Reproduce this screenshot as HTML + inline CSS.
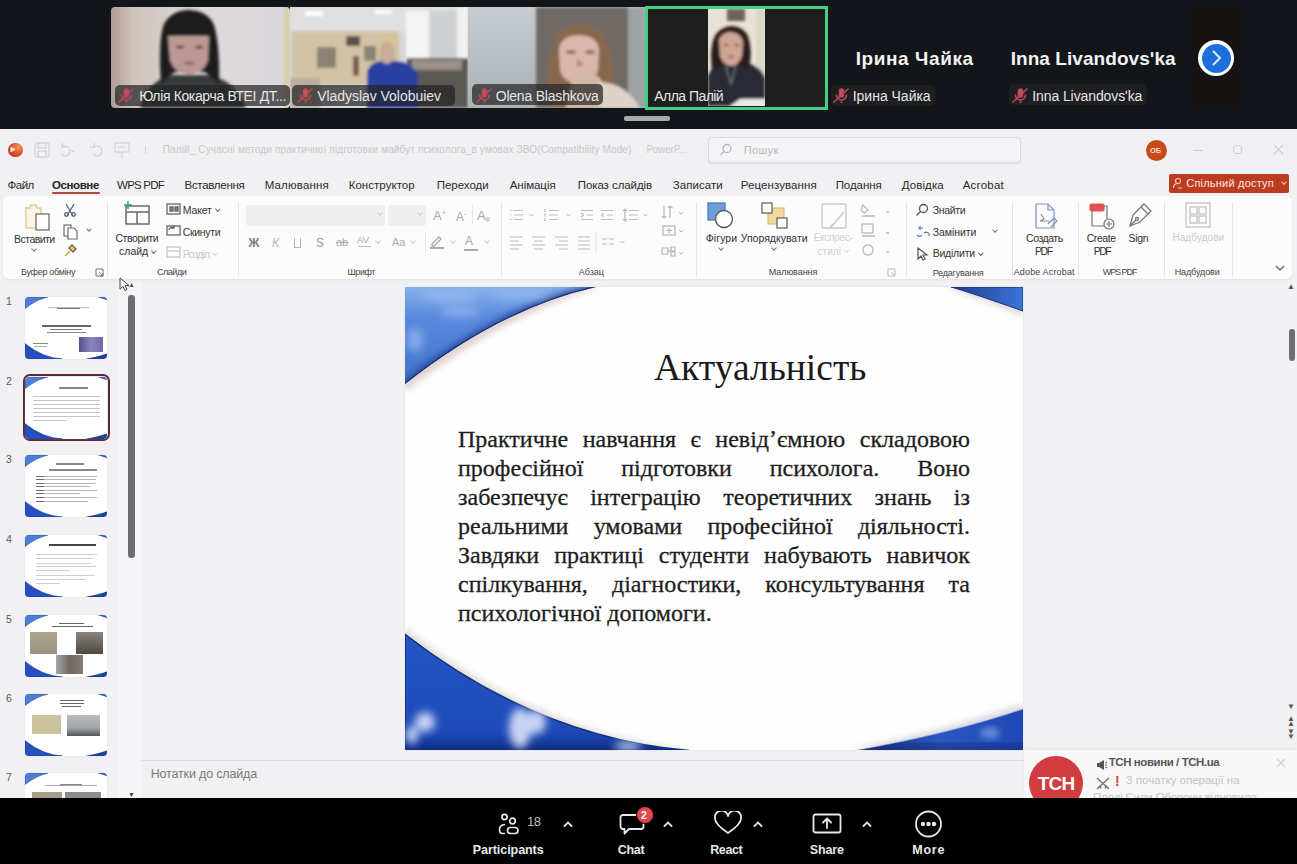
<!DOCTYPE html>
<html><head><meta charset="utf-8">
<style>
*{margin:0;padding:0;box-sizing:border-box}
html,body{width:1297px;height:864px;overflow:hidden;background:#131619;font-family:"Liberation Sans",sans-serif}
.a{position:absolute}
.t{position:absolute;white-space:nowrap;line-height:1}
#top{left:0;top:0;width:1297px;height:129px;background:#121519}
.tile{position:absolute;top:7px;height:101px;overflow:hidden}
.lbl{position:absolute;height:21px;background:rgba(36,36,38,.72);border-radius:5px}
.nm{position:absolute;color:#e6e6e6;font-size:14px;line-height:1;white-space:nowrap}
#ppt{left:0;top:129px;width:1297px;height:669px;background:#f1f0f2;overflow:hidden}
#bot{left:0;top:798px;width:1297px;height:66px;background:#000}
.tab{position:absolute;top:49px;font-size:11.5px;color:#2a2a2a;line-height:1;white-space:nowrap}
.rb{position:absolute;font-size:10.5px;color:#333;line-height:1;white-space:nowrap}
.gl{position:absolute;top:139px;font-size:9px;color:#444;line-height:1;white-space:nowrap}
.sep{position:absolute;top:73px;width:1px;height:74px;background:#e4e4e4}
.thumb{position:absolute;left:25px;width:82px;height:62px;border-radius:4px;overflow:hidden;background:#fff;box-shadow:0 0 1px #bbb}
.num{position:absolute;left:6px;font-size:10.5px;color:#5a5a5a;line-height:1}
.bl{position:absolute;top:46px;color:#eaeaea;font-size:12.5px;font-weight:bold;line-height:1;white-space:nowrap}
.bodyl{font-family:"Liberation Serif",serif;font-size:24px;line-height:28.9px;color:#1e1e1e;white-space:nowrap;-webkit-text-stroke:0.3px #1e1e1e}
.cv{position:absolute;width:4px;height:4px;border-right:1.1px solid #777;border-bottom:1.1px solid #777;transform:rotate(45deg)}
.cvi{display:inline-block;width:3.5px;height:3.5px;border-right:1px solid currentColor;border-bottom:1px solid currentColor;transform:rotate(45deg);margin-left:4px;vertical-align:3px;opacity:.8}
.chev{position:absolute;top:19px;width:7px;height:7px;border-left:1.6px solid #ddd;border-top:1.6px solid #ddd;transform:rotate(45deg)}
</style></head><body>
<!-- ============ TOP ZOOM STRIP ============ -->
<div id="top" class="a">
  <svg class="a" style="left:0;top:0" width="1297" height="129" viewBox="0 0 1297 129">
    <defs>
      <filter id="pb" x="-10%" y="-10%" width="120%" height="120%"><feGaussianBlur stdDeviation="1.6"/></filter>
      <filter id="pb2" x="-10%" y="-10%" width="120%" height="120%"><feGaussianBlur stdDeviation="3"/></filter>
      <clipPath id="c1"><rect x="111" y="7" width="179" height="101" rx="4"/></clipPath>
      <clipPath id="c2"><rect x="290" y="7" width="178" height="101"/></clipPath>
      <clipPath id="c3"><rect x="468" y="7" width="178" height="101"/></clipPath>
      <clipPath id="c4"><rect x="708" y="9" width="57" height="97"/></clipPath>
      <linearGradient id="w1" x1="0" y1="0" x2="1" y2="0"><stop offset="0" stop-color="#b09c94"/><stop offset=".12" stop-color="#cfc3bc"/><stop offset=".35" stop-color="#d9d1cd"/><stop offset=".6" stop-color="#dedadc"/><stop offset="1" stop-color="#d9d6da"/></linearGradient>
      <linearGradient id="w3" x1="0" y1="0" x2="0" y2="1"><stop offset="0" stop-color="#c6cccf"/><stop offset="1" stop-color="#aab2b5"/></linearGradient>
    </defs>
    <g clip-path="url(#c1)">
      <rect x="111" y="7" width="179" height="101" fill="url(#w1)"/>
      <g filter="url(#pb)">
        <path d="M140 108Q148 80 172 75H208Q236 80 246 108Z" fill="#343a3a"/>
        <path d="M161 84Q158 40 164 24Q172 10 189 10Q208 11 214 25Q220 45 219 84Q210 76 205 72H175Q168 76 161 84Z" fill="#1d1a1d"/>
        <path d="M168 36Q169 32 190 32Q209 32 209 38L208 60Q204 73 189 75Q174 73 170 60Z" fill="#bc9893"/>
        <rect x="166" y="28" width="46" height="8" fill="#1d1a1d"/>
        <ellipse cx="180" cy="47" rx="4" ry="1.5" fill="#5a3c3c"/><ellipse cx="199" cy="47" rx="4" ry="1.5" fill="#5a3c3c"/><ellipse cx="189" cy="63" rx="5" ry="1.5" fill="#8a5a5a"/>
        <rect x="284" y="7" width="6" height="101" fill="#d9cfa8"/>
      </g>
    </g>
    <g clip-path="url(#c2)">
      <rect x="290" y="7" width="178" height="101" fill="#d6d6d6"/>
      <g filter="url(#pb)">
        <rect x="290" y="7" width="178" height="25" fill="#e0e0e0"/>
        <rect x="305" y="11" width="18" height="5" fill="#fdfdfd"/>
        <rect x="375" y="10" width="17" height="4" fill="#fdfdfd"/>
        <rect x="406" y="11" width="23" height="48" fill="#f4f4f4"/>
        <rect x="429" y="11" width="28" height="50" fill="#cdd0d1"/>
        <rect x="457" y="7" width="11" height="52" fill="#f2f2f2"/>
        <rect x="292" y="31" width="107" height="54" fill="#d2c3a6"/>
        <rect x="317" y="47" width="19" height="21" fill="#8a8274"/>
        <rect x="346" y="36" width="14" height="10" fill="#5a534c"/>
        <rect x="364" y="46" width="12" height="15" fill="#8a8274"/>
        <rect x="353" y="56" width="6" height="20" fill="#7a5a48"/>
        <rect x="290" y="78" width="30" height="30" fill="#b9ae9f"/>
        <rect x="407" y="58" width="61" height="50" fill="#5c5853"/>
        <rect x="412" y="60" width="50" height="10" fill="#9a9088"/>
        <path d="M367 108V72Q370 61 386 60Q412 61 418 74V108Z" fill="#2c3fa0"/>
        <ellipse cx="387" cy="53" rx="8" ry="11" fill="#c9ab98"/>
        <path d="M377 48Q378 38 387 38Q397 38 397 48Q393 42 387 42Q381 42 377 48Z" fill="#d8c48e"/>
      </g>
    </g>
    <g clip-path="url(#c3)">
      <rect x="468" y="7" width="178" height="101" fill="url(#w3)"/>
      <g filter="url(#pb)">
        <rect x="536" y="7" width="92" height="101" fill="#6f6a66"/>
        <rect x="628" y="7" width="18" height="101" fill="#9ea3a6"/>
        <path d="M548 108Q546 60 556 36Q566 24 580 24Q598 25 606 40Q614 60 616 108Z" fill="#86674e"/>
        <path d="M559 50Q560 36 579 35Q598 36 599 50L598 70Q594 84 578 84Q563 82 560 70Z" fill="#dab6aa"/>
        <ellipse cx="571" cy="52" rx="5" ry="1.6" fill="#6a4a40"/><ellipse cx="590" cy="52" rx="5" ry="1.6" fill="#6a4a40"/><path d="M578 58L576 66H584Z" fill="#b88a80"/>
        <path d="M566 108Q568 76 584 70Q600 72 606 90L612 108Z" fill="#d2b9a4"/>
        <path d="M598 82Q625 82 640 108H600Z" fill="#ddd3c8"/>
      </g>
    </g>
    <!-- tile 4 -->
    <rect x="646.5" y="7.5" width="180" height="101" fill="#1f1e1e" stroke="#44cf86" stroke-width="3"/>
    <g clip-path="url(#c4)">
      <rect x="708" y="9" width="57" height="97" fill="#e8e3d6"/>
      <g filter="url(#pb)">
        <rect x="756" y="9" width="9" height="97" fill="#dcd6c6"/>
        <rect x="727" y="9" width="18" height="12" fill="#6d6258"/>
        <path d="M708 106V76Q711 66 722 63Q735 61 750 64Q762 68 765 78V106Z" fill="#2b2c36"/>
        <path d="M712 70Q709 45 716 34Q723 26 732 26Q744 27 748 36Q753 50 749 70Q740 64 731 64Q720 64 712 70Z" fill="#2a1f1d"/>
        <path d="M719 40Q722 32 731 32Q741 33 743 42L742 56Q738 66 731 66Q723 65 720 56Z" fill="#cfa594"/>
        <ellipse cx="726" cy="45" rx="2.5" ry="1" fill="#5a3a34"/><ellipse cx="737" cy="45" rx="2.5" ry="1" fill="#5a3a34"/><ellipse cx="731" cy="57" rx="3.5" ry="1.2" fill="#a06a60"/>
        <path d="M726 66L731 84L736 66" stroke="#8a8a90" stroke-width="1" fill="none"/>
        <path d="M730 106L740 99H765V106Z" fill="#e5ebe8"/>
      </g>
    </g>
  </svg>
  <!-- labels -->
  <div class="lbl" style="left:115px;top:85px;width:175px"></div>
  <div class="lbl" style="left:292px;top:85px;width:163px"></div>
  <div class="lbl" style="left:472px;top:84px;width:131px"></div>
  <div class="lbl" style="left:831px;top:85px;width:104px"></div>
  <div class="lbl" style="left:1009px;top:84px;width:138px"></div>
  <div class="nm" style="letter-spacing:-0.36px;left:139.2px;top:88.6px">Юлія Кокарча ВТЕІ ДТ...</div>
  <div class="nm" style="letter-spacing:-0.04px;left:317.2px;top:88.6px">Vladyslav Volobuiev</div>
  <div class="nm" style="letter-spacing:-0.20px;left:495.7px;top:88.6px">Olena Blashkova</div>
  <div class="nm" style="letter-spacing:-0.55px;left:654.3px;top:88.6px">Алла Палій</div>
  <div class="nm" style="letter-spacing:-0.01px;left:852.7px;top:88.6px">Ірина Чайка</div>
  <div class="nm" style="letter-spacing:-0.10px;left:1032.3px;top:88.6px">Inna Livandovsʹka</div>
  <!-- mic muted icons -->
  <svg class="a" style="left:117px;top:87px" width="18" height="17" viewBox="0 0 18 17"><g stroke="#b94a55" stroke-width="1.6" fill="none" stroke-linecap="round"><rect x="7.5" y="2" width="4" height="8" rx="2" fill="#c25560"/><path d="M4.5 8a5 5 0 0 0 10 0M9.5 13v2.5M2 15L16 2"/></g></svg>
  <svg class="a" style="left:296px;top:87px" width="18" height="17" viewBox="0 0 18 17"><g stroke="#b94a55" stroke-width="1.6" fill="none" stroke-linecap="round"><rect x="7.5" y="2" width="4" height="8" rx="2" fill="#c25560"/><path d="M4.5 8a5 5 0 0 0 10 0M9.5 13v2.5M2 15L16 2"/></g></svg>
  <svg class="a" style="left:475px;top:87px" width="18" height="17" viewBox="0 0 18 17"><g stroke="#b94a55" stroke-width="1.6" fill="none" stroke-linecap="round"><rect x="7.5" y="2" width="4" height="8" rx="2" fill="#c25560"/><path d="M4.5 8a5 5 0 0 0 10 0M9.5 13v2.5M2 15L16 2"/></g></svg>
  <svg class="a" style="left:832px;top:87px" width="18" height="17" viewBox="0 0 18 17"><g stroke="#b94a55" stroke-width="1.6" fill="none" stroke-linecap="round"><rect x="7.5" y="2" width="4" height="8" rx="2" fill="#c25560"/><path d="M4.5 8a5 5 0 0 0 10 0M9.5 13v2.5M2 15L16 2"/></g></svg>
  <svg class="a" style="left:1011px;top:87px" width="18" height="17" viewBox="0 0 18 17"><g stroke="#b94a55" stroke-width="1.6" fill="none" stroke-linecap="round"><rect x="7.5" y="2" width="4" height="8" rx="2" fill="#c25560"/><path d="M4.5 8a5 5 0 0 0 10 0M9.5 13v2.5M2 15L16 2"/></g></svg>
  <!-- big names -->
  <div class="t" style="color:#f2f2f2;font-size:19px;font-weight:bold;letter-spacing:0.59px;left:855.7px;top:48.7px">Ірина Чайка</div>
  <div class="t" style="color:#f2f2f2;font-size:19px;font-weight:bold;letter-spacing:0.06px;left:1010.7px;top:49.2px">Inna Livandovsʹka</div>
  <div class="a" style="left:1192px;top:8px;width:48px;height:100px;background:#1a130e;opacity:.45"></div>
  <div class="a" style="left:1198px;top:40px;width:36px;height:36px;border-radius:50%;background:#fff"></div>
  <div class="a" style="left:1201.5px;top:43.5px;width:29px;height:29px;border-radius:50%;background:#1e6fdc"></div>
  <svg class="a" style="left:1198px;top:40px" width="36" height="36" viewBox="0 0 36 36"><path d="M15.5 11.5l6.5 6.5-6.5 6.5" stroke="#d8ecff" stroke-width="2" fill="none" stroke-linecap="round" stroke-linejoin="round"/></svg>
  <div class="a" style="left:624px;top:116px;width:46px;height:5px;background:#a9a9ab;border-radius:2px"></div>
</div>

<!-- ============ POWERPOINT ============ -->
<div id="ppt" class="a">
  <!-- title bar -->
  <div class="a" style="left:8px;top:13.5px;width:14.5px;height:14.5px;border-radius:50%;background:radial-gradient(circle at 70% 30%,#f59a5a,#d9502c 50%,#9e2418)"></div>
  <svg class="a" style="left:10px;top:17px" width="6" height="7" viewBox="0 0 6 7"><path d="M0.5 0.5L5.5 3.5L0.5 6.5Z" fill="#fbe3dc"/></svg>
  <svg class="a" style="left:34px;top:12px" width="110" height="18" viewBox="0 0 110 18" fill="none" stroke="#d2d0d4" stroke-width="1.2">
    <rect x="1" y="2" width="14" height="14" rx="1.5"/><rect x="4" y="2" width="8" height="5"/><rect x="4" y="10" width="8" height="6"/>
    <path d="M28 6a5 5 0 1 1 -1 7M28 2v4h4"/><path d="M37 9l2 2 2-2" stroke-width="1"/>
    <path d="M64 6a5 5 0 1 1 -1 7" transform="translate(-4 0)"/><path d="M60 2v4h-4"/>
    <rect x="81" y="2" width="14" height="9"/><path d="M88 11v6M84 6h8"/>
  </svg>
  <div class="a" style="left:145px;top:17px;width:1px;height:8px;background:#d6d4d8"></div>
  <div class="t" style="font-size:10px;color:#c9c7cb;letter-spacing:0.13px;left:162.7px;top:16.1px">Палій_ Сучасні методи практичної підготовки майбут психолога_в умовах ЗВО(Compatibility Mode)</div>
  <div class="t" style="font-size:10px;color:#cbc9cd;letter-spacing:-0.22px;left:646.4px;top:16.1px">PowerP...</div>
  <div class="a" style="left:708px;top:8px;width:313px;height:26px;border:1px solid #dcdadd;border-radius:4px;background:#f5f4f6;box-shadow:0 1px 1px #e0dee1"></div>
  <svg class="a" style="left:719px;top:14px" width="14" height="14" viewBox="0 0 14 14" fill="none" stroke="#b9b7bb" stroke-width="1.3"><circle cx="8" cy="5.5" r="4"/><path d="M5 8.5L1.5 12"/></svg>
  <div class="t" style="font-size:11px;color:#b9b7bb;letter-spacing:0.36px;left:743.7px;top:15.6px">Пошук</div>
  <div class="a" style="left:1146px;top:11px;width:21px;height:21px;border-radius:50%;background:#c84a16"></div>
  <div class="t" style="left:1150px;top:18px;font-size:7.5px;color:#f7e0d2;font-weight:bold">ОБ</div>
  <div class="a" style="left:1193px;top:21px;width:10px;height:1px;background:#cfcdd1"></div>
  <div class="a" style="left:1233px;top:16px;width:9px;height:9px;border:1.5px solid #d2d0d4;border-radius:3px"></div>
  <svg class="a" style="left:1273px;top:15px" width="11" height="11" viewBox="0 0 11 11" stroke="#d0ced2" stroke-width="1.1"><path d="M1 1l9 9M10 1l-9 9"/></svg>

  <!-- tabs -->
  <div class="tab" style="letter-spacing:-0.53px;left:7.6px;top:50.9px">Файл</div>
  <div class="tab" style="font-weight:bold;color:#222;letter-spacing:-0.42px;left:52.1px;top:50.9px">Основне</div>
  <div class="a" style="left:52px;top:63px;width:48px;height:2px;background:#ad4a3c;border-radius:1px"></div>
  <div class="tab" style="letter-spacing:-0.80px;left:117.1px;top:50.9px">WPS PDF</div>
  <div class="tab" style="letter-spacing:-0.29px;left:184.5px;top:50.9px">Вставлення</div>
  <div class="tab" style="letter-spacing:0.16px;left:264.7px;top:50.9px">Малювання</div>
  <div class="tab" style="letter-spacing:0.04px;left:348.7px;top:50.9px">Конструктор</div>
  <div class="tab" style="letter-spacing:-0.02px;left:436.7px;top:50.9px">Переходи</div>
  <div class="tab" style="letter-spacing:-0.04px;left:509.7px;top:50.9px">Анімація</div>
  <div class="tab" style="letter-spacing:-0.07px;left:577.7px;top:50.9px">Показ слайдів</div>
  <div class="tab" style="letter-spacing:0.06px;left:672.7px;top:50.9px">Записати</div>
  <div class="tab" style="letter-spacing:0.09px;left:740.7px;top:50.9px">Рецензування</div>
  <div class="tab" style="letter-spacing:-0.08px;left:835.7px;top:50.9px">Подання</div>
  <div class="tab" style="letter-spacing:0.10px;left:901.7px;top:50.9px">Довідка</div>
  <div class="tab" style="letter-spacing:0.23px;left:962.7px;top:50.9px">Acrobat</div>
  <div class="a" style="left:1169px;top:44.5px;width:119.5px;height:19.5px;background:#bd3c21;border-radius:2px"></div>
  <svg class="a" style="left:1172px;top:48px" width="11" height="12" viewBox="0 0 11 12" fill="none" stroke="#f3c9bb" stroke-width="1.1"><circle cx="6" cy="4" r="2.5"/><path d="M1.5 11c0-3 2-4.5 4.5-4.5M6 11h4"/></svg>
  <div class="t" style="font-size:11px;color:#fbe9e2;letter-spacing:0.20px;left:1186.3px;top:49.1px">Спільний доступ</div>
  <div class="cv" style="left:1281.5px;top:51px;border-color:#f3c9bb;width:4px;height:4px"></div>

  <!-- ribbon -->
  <div class="a" style="left:3px;top:67px;width:1289px;height:83px;background:#fcfcfc;border-radius:6px;box-shadow:0 1px 2px #e2e0e3"></div>
  <div class="sep" style="left:107px"></div>
  <div class="sep" style="left:238px"></div>
  <div class="sep" style="left:501px"></div>
  <div class="sep" style="left:696px"></div>
  <div class="sep" style="left:906px"></div>
  <div class="sep" style="left:1012px"></div>
  <div class="sep" style="left:1078px"></div>
  <div class="sep" style="left:1164px"></div>
  <div class="sep" style="left:1232px"></div>

  <!-- Буфер обміну -->
  <svg class="a" style="left:23px;top:73px" width="28" height="30" viewBox="0 0 28 30" fill="none" stroke-width="1.3">
    <path d="M3 6h4l1-3h5l1 3h4v20H3z" stroke="#e3c791" fill="#fbf5e8"/>
    <rect x="13" y="12" width="13" height="16" stroke="#6f6f6f" fill="#fff"/>
  </svg>
  <div class="rb" style="letter-spacing:-0.54px;left:14.1px;top:105.3px">Вставити</div>
  <div class="cv" style="left:31.7px;top:118.4px;border-color:#777"></div>
  <svg class="a" style="left:63px;top:74px" width="14" height="14" viewBox="0 0 14 14" fill="none" stroke="#51637a" stroke-width="1.3"><path d="M3 1l7 12M11 1L4 13"/><circle cx="3.5" cy="11.5" r="1.8"/><circle cx="10.5" cy="11.5" r="1.8"/></svg>
  <svg class="a" style="left:63px;top:95px" width="16" height="16" viewBox="0 0 16 16" fill="none" stroke="#6d6d6d" stroke-width="1.2"><rect x="1" y="1" width="7" height="11"/><path d="M5 4h6l3 3v8H5z" fill="#fff"/></svg>
  <div class="cv" style="left:87.2px;top:98.0px;border-color:#777"></div>
  <svg class="a" style="left:63px;top:115px" width="14" height="14" viewBox="0 0 14 14" fill="none" stroke-width="1.5"><path d="M2 12l5-5" stroke="#c9a04a"/><path d="M6 4l4 4 3-3-4-4z" stroke="#7a6a45" fill="#e9c46a"/></svg>
  <div class="gl" style="letter-spacing:-0.28px;left:21.0px;top:139.3px">Буфер обміну</div>
  <svg class="a" style="left:95px;top:139px" width="9" height="9" viewBox="0 0 9 9" fill="none" stroke="#777" stroke-width="1"><path d="M1 1h7v7H1zM4 4l4 4M5 8h3V5"/></svg>

  <!-- Слайди -->
  <svg class="a" style="left:122px;top:71px" width="30" height="26" viewBox="0 0 30 26" fill="none" stroke-width="1.5">
    <rect x="4" y="6" width="23" height="18" stroke="#6a6a6a"/><path d="M4 12h23M15 12v12" stroke="#6a6a6a"/>
    <path d="M6 1v8M2 5h8" stroke="#3fa36a"/>
  </svg>
  <div class="rb" style="letter-spacing:-0.40px;left:115.4px;top:104.4px">Створити</div>
  <div class="rb" style="left:119px;top:117px">слайд<span class="cvi"></span></div>
  <svg class="a" style="left:166px;top:203px;display:none" width="1" height="1"></svg>
  <svg class="a" style="left:166px;top:74px" width="15" height="12" viewBox="0 0 15 12" fill="none" stroke="#666" stroke-width="1.3"><rect x="1" y="1" width="13" height="10"/><path d="M4 4h3v4H4zM9 4h3v4H9z" fill="#888"/></svg>
  <div class="rb" style="letter-spacing:-0.13px;left:182.7px;top:75.7px">Макет<span class="cvi"></span></div>
  <svg class="a" style="left:166px;top:95px" width="15" height="12" viewBox="0 0 15 12" fill="none" stroke="#666" stroke-width="1.3"><rect x="1" y="2" width="13" height="9"/><path d="M3 6a3 3 0 0 1 5 -2M8 1v3h-3"/></svg>
  <div class="rb" style="letter-spacing:-0.29px;left:182.7px;top:97.9px">Скинути</div>
  <svg class="a" style="left:166px;top:117px" width="15" height="12" viewBox="0 0 15 12" fill="none" stroke="#c7c7c7" stroke-width="1.3"><rect x="1" y="1" width="13" height="10"/><path d="M1 5h13"/></svg>
  <div class="rb" style="color:#c9c9c9;letter-spacing:-0.78px;left:182.7px;top:119.7px">Розділ<span class="cvi"></span></div>
  <div class="gl" style="letter-spacing:-0.47px;left:157.0px;top:139.3px">Слайди</div>

  <!-- Шрифт -->
  <div class="a" style="left:246px;top:76px;width:139px;height:21px;background:#efefef;border-radius:3px"></div>
  <div class="a" style="left:388px;top:76px;width:38px;height:21px;background:#efefef;border-radius:3px"></div>
  <div class="cv" style="left:377.5px;top:82.0px;border-color:#ccc"></div>
  <div class="cv" style="left:417.5px;top:82.0px;border-color:#ccc"></div>
  <div class="t" style="left:433px;top:80px;font-size:13px;color:#a8a8a8">A<sup style="font-size:7px">+</sup></div>
  <div class="t" style="left:456px;top:81px;font-size:12px;color:#a8a8a8">A<sup style="font-size:7px">-</sup></div>
  <div class="a" style="left:472px;top:76px;width:1px;height:20px;background:#e6e6e6"></div>
  <div class="t" style="left:477px;top:80px;font-size:13px;color:#a8a8a8">A<span style="font-size:9px">ᵩ</span></div>
  <div class="t" style="left:248.5px;top:108px;font-size:12px;color:#7a7a7a;font-weight:bold">Ж</div>
  <div class="t" style="left:272px;top:108px;font-size:12px;color:#b5b5b5;font-style:italic">К</div>
  <div class="a" style="left:294px;top:109px;width:7px;height:10px;border:1.2px solid #b5b5b5;border-top:none"></div>
  <div class="t" style="left:316px;top:108px;font-size:12px;color:#999">S</div>
  <div class="t" style="left:336px;top:108px;font-size:11px;color:#aaa;text-decoration:line-through">ab</div>
  <div class="t" style="left:357px;top:106px;font-size:9.5px;color:#aaa">AV</div>
  <div class="a" style="left:358px;top:117px;width:13px;height:1px;background:#bbb"></div>
  <div class="cv" style="left:376px;top:110px;border-color:#ccc;width:4px;height:4px"></div>
  <div class="t" style="left:392px;top:108px;font-size:11px;color:#aaa">Aa</div>
  <div class="cv" style="left:411px;top:110px;border-color:#ccc;width:4px;height:4px"></div>
  <div class="a" style="left:424.5px;top:104px;width:1px;height:20px;background:#e6e6e6"></div>
  <svg class="a" style="left:429px;top:105px" width="16" height="15" viewBox="0 0 16 15" fill="none" stroke="#aaa" stroke-width="1.3"><path d="M3 10l7-7 2 2-7 7H3z"/><path d="M1 14h14" stroke-width="2"/></svg>
  <div class="cv" style="left:451px;top:110px;border-color:#ccc;width:4px;height:4px"></div>
  <div class="t" style="left:465px;top:106px;font-size:12px;color:#aaa">A</div>
  <div class="a" style="left:464px;top:120px;width:14px;height:2px;background:#aaa"></div>
  <div class="cv" style="left:485px;top:110px;border-color:#ccc;width:4px;height:4px"></div>
  <div class="gl" style="letter-spacing:-0.38px;left:347.4px;top:139.1px">Шрифт</div>

  <!-- Абзац (grey lines) -->
  <svg class="a" style="left:508px;top:78px" width="186" height="52" viewBox="0 0 186 52" fill="none" stroke="#bcbcbc" stroke-width="1.2">
    <path d="M2 3.5h1.5M6 3.5h9M2 8h1.5M6 8h9M2 12.5h1.5M6 12.5h9"/><path d="M21.5 7l2 2 2-2" stroke-width="1"/>
    <path d="M37 2v3M37 6.5v3M37 11v3M41 3.5h9M41 8h9M41 12.5h9"/><path d="M58.5 7l2 2 2-2" stroke-width="1"/>
    <path d="M73 3.5h12M79 8h6M73 12.5h12M73 6l2.5 2-2.5 2"/>
    <path d="M93 3.5h12M99 8h6M93 12.5h12M96 6l-2.5 2 2.5 2"/>
    <path d="M117 2v12M115 4l2-2 2 2M115 12l2 2 2-2M121 3.5h9M121 8h9M121 12.5h9"/><path d="M135.5 7l2 2 2-2" stroke-width="1"/>
    <path d="M2 30h13M2 34h9M2 38h13M2 42h9"/>
    <path d="M24 30h13M26 34h9M24 38h13M26 42h9"/>
    <path d="M47 30h13M51 34h9M47 38h13M51 42h9"/>
    <path d="M70 30h12M70 34h12M70 38h12M70 42h12"/>
    <path d="M88 26v20" stroke="#e4e4e4"/>
    <path d="M94 32h5M101 32h5M94 37h5M101 37h5"/><path d="M112.5 34l2 2 2-2" stroke-width="1"/>
  </svg>
  <svg class="a" style="left:658px;top:75px" width="30" height="58" viewBox="0 0 30 58" fill="none" stroke="#b5b5b5" stroke-width="1.2">
    <path d="M6 2v12M12 2v12M4 12l2 2 2-2M9.5 4l2.5-2 2.5 2"/><path d="M21 8l2 2 2-2" stroke-width="1"/>
    <rect x="5" y="22" width="12" height="9"/><path d="M11 24v5M8 26.5h6"/><path d="M21 26l2 2 2-2" stroke-width="1"/>
    <path d="M4 44h6v6H4zM10 47h3M13 43h4v4h-4zM13 48h4v4h-4z"/><path d="M21 48l2 2 2-2" stroke-width="1"/>
  </svg>
  <div class="gl" style="letter-spacing:0.01px;left:578.7px;top:139.1px">Абзац</div>

  <!-- Малювання -->
  <svg class="a" style="left:706px;top:72px" width="28" height="30" viewBox="0 0 28 30" stroke-width="1.3">
    <rect x="2" y="2" width="17" height="17" fill="#6e9fd8" stroke="#4a7fbe"/>
    <circle cx="18" cy="18" r="8.5" fill="#fff" stroke="#555"/>
  </svg>
  <div class="rb" style="letter-spacing:0.10px;left:705.7px;top:104.1px">Фігури</div>
  <div class="cv" style="left:718.5px;top:117.0px;border-color:#777"></div>
  <svg class="a" style="left:760px;top:72px" width="30" height="30" viewBox="0 0 30 30" stroke-width="1.3">
    <rect x="8" y="7" width="16" height="16" fill="#f1d9a0" stroke="#e0c07a"/>
    <rect x="2" y="2" width="10" height="10" fill="#fff" stroke="#666"/>
    <rect x="17" y="17" width="10" height="10" fill="#fff" stroke="#666"/>
  </svg>
  <div class="rb" style="letter-spacing:0.00px;left:740.7px;top:104.1px">Упорядкувати</div>
  <div class="cv" style="left:771.5px;top:117.0px;border-color:#777"></div>
  <svg class="a" style="left:820px;top:73px" width="30" height="30" viewBox="0 0 30 30" fill="none" stroke="#c9c9c9" stroke-width="1.4">
    <rect x="2" y="2" width="24" height="24" rx="2"/><path d="M12 24l12-14M10 26c2-4 4-4 4-4"/>
  </svg>
  <div class="rb" style="color:#cfcfcf;font-size:10px;letter-spacing:-0.29px;left:813.7px;top:104.3px">Експрес-</div>
  <div class="rb" style="color:#cfcfcf;font-size:10px;letter-spacing:0.08px;left:817.4px;top:117.7px">стилі<span class="cvi"></span></div>
  <svg class="a" style="left:860px;top:73px" width="34" height="62" viewBox="0 0 34 62" fill="none" stroke="#b8b8b8" stroke-width="1.3">
    <path d="M3 3l5 5-4 3-3-3zM2 14h13"/><path d="M26 10h3"/>
    <rect x="2" y="22" width="11" height="9"/><path d="M2 34h13M26 31h3"/>
    <circle cx="8" cy="48" r="5"/><path d="M26 50h3"/>
  </svg>
  <div class="gl" style="letter-spacing:-0.05px;left:768.7px;top:138.8px">Малювання</div>
  <svg class="a" style="left:887px;top:139px" width="9" height="9" viewBox="0 0 9 9" fill="none" stroke="#bbb" stroke-width="1"><path d="M1 1h7v7H1zM4 4l4 4"/></svg>

  <!-- Редагування -->
  <svg class="a" style="left:915px;top:74px" width="14" height="14" viewBox="0 0 14 14" fill="none" stroke="#555" stroke-width="1.3"><circle cx="8.5" cy="5.5" r="4"/><path d="M5.5 8.5L1.5 12.5"/></svg>
  <div class="rb" style="letter-spacing:-0.31px;left:932.7px;top:75.9px">Знайти</div>
  <svg class="a" style="left:915px;top:96px" width="15" height="14" viewBox="0 0 15 14" fill="none" stroke="#4a7fbe" stroke-width="1.2"><path d="M3 3h5M5 1v4M2 10a3 3 0 0 0 5 0M9 8a3 3 0 0 1 5 3"/></svg>
  <div class="rb" style="letter-spacing:-0.04px;left:932.7px;top:97.9px">Замінити</div>
  <div class="cv" style="left:992.5px;top:99.0px;border-color:#777"></div>
  <svg class="a" style="left:916px;top:118px" width="13" height="14" viewBox="0 0 13 14" fill="none" stroke="#555" stroke-width="1.2"><path d="M2 1v11l3-3 2 4 2-1-2-4h4z"/></svg>
  <div class="rb" style="letter-spacing:-0.23px;left:932.7px;top:119.2px">Виділити<span class="cvi"></span></div>
  <div class="gl" style="letter-spacing:-0.20px;left:932.7px;top:139.8px">Редагування</div>

  <!-- Adobe Acrobat -->
  <svg class="a" style="left:1033px;top:73px" width="26" height="30" viewBox="0 0 26 30" fill="none" stroke="#7b95b5" stroke-width="1.2">
    <path d="M3 2h12l6 6v18H3z"/><path d="M15 2v6h6"/><path d="M8 12l3 5-4 2h9" stroke="#8a8a8a"/><path d="M15 22l6-6 3 3-6 6" stroke="#6d8fc0"/>
  </svg>
  <div class="rb" style="letter-spacing:-0.47px;left:1026.1px;top:103.7px">Создать</div>
  <div class="rb" style="letter-spacing:-1.50px;left:1035.1px;top:116.7px">PDF</div>
  <div class="gl" style="font-size:9px;letter-spacing:0.15px;left:1013.7px;top:139.3px">Adobe Acrobat</div>

  <!-- WPS PDF -->
  <svg class="a" style="left:1089px;top:73px" width="28" height="30" viewBox="0 0 28 30" fill="none" stroke-width="1.2">
    <path d="M3 4h15v20H3z" stroke="#777"/><rect x="1" y="2" width="14" height="7" rx="1.5" fill="#e05252" stroke="#e05252"/>
    <circle cx="20" cy="22" r="5" fill="#fff" stroke="#777"/><path d="M20 19v6M17 22h6" stroke="#777"/>
  </svg>
  <div class="rb" style="letter-spacing:-0.42px;left:1086.7px;top:103.7px">Create</div>
  <div class="rb" style="letter-spacing:-1.50px;left:1093.7px;top:116.7px">PDF</div>
  <svg class="a" style="left:1126px;top:73px" width="28" height="28" viewBox="0 0 28 28" fill="none" stroke="#777" stroke-width="1.3">
    <path d="M4 24l3-11 8-8 7 7-8 8z"/><path d="M15 5l3-3 7 7-3 3"/><path d="M4 24l6-6"/><circle cx="11" cy="17" r="1.5"/>
  </svg>
  <div class="rb" style="letter-spacing:-0.27px;left:1128.5px;top:103.7px">Sign</div>
  <div class="gl" style="font-size:9px;letter-spacing:-1.04px;left:1102.7px;top:139.3px">WPS PDF</div>

  <!-- Надбудови -->
  <svg class="a" style="left:1185px;top:73px" width="26" height="26" viewBox="0 0 26 26" fill="none" stroke="#c8c8c8" stroke-width="1.4">
    <rect x="1" y="1" width="24" height="24"/><rect x="5" y="5" width="7" height="7"/><rect x="14" y="5" width="7" height="7"/><rect x="5" y="14" width="7" height="7"/><rect x="14" y="14" width="7" height="7"/>
  </svg>
  <div class="rb" style="color:#cacaca;font-size:10px;letter-spacing:0.09px;left:1172.4px;top:103.9px">Надбудови</div>
  <div class="gl" style="font-size:9px;letter-spacing:-0.12px;left:1174.7px;top:139.3px">Надбудови</div>
  <svg class="a" style="left:1275px;top:136px" width="10" height="7" viewBox="0 0 10 7" fill="none" stroke="#666" stroke-width="1.3"><path d="M1 1l4 4 4-4"/></svg>

  <!-- cursor -->
  <svg class="a" style="left:119px;top:148px;z-index:5" width="16" height="16" viewBox="0 0 16 16" fill="#fff" stroke="#444" stroke-width="1"><path d="M1 1v11l3-2.5 2 4 2-1-2-4h4z"/></svg>

  <!-- thumbnails panel -->
  <div class="a" style="left:118px;top:153px;width:22px;height:516px;background:#f5f4f6"></div>
  <div class="a" style="left:128px;top:166px;width:7px;height:263px;background:#6e6e70;border-radius:3px"></div>
  <div class="t" style="left:128px;top:152px;font-size:7px;color:#555">▲</div>
  <div class="t" style="left:128px;top:662px;font-size:7px;color:#444">▼</div>
  <div class="a" style="left:140px;top:151px;width:1px;height:518px;background:#f7f6f8"></div>

  <div class="num" style="top:167px">1</div>
<div class="thumb" style="top:168px"><svg class="a" style="left:0;top:0" width="82" height="62" viewBox="0 0 82 62">
<path d="M0 0H23Q11.5 2.5 0 11.5Z" fill="#4d7fd6" stroke="#2a4a9a" stroke-width=".6"/><path d="M0 46.6Q17.7 61.1 37.7 62H0Z" fill="#2550bd" stroke="#1a3a90" stroke-width=".6"/>
<path d="M72.5 0H82V3.2Q75 .7 72.5 0Z" fill="#2c58be"/><path d="M59.8 62Q72.8 59.7 82 56.5V62Z" fill="#213f9e"/></svg><div class="a" style="left:23.0px;top:10.0px;width:41.0px;height:0.8px;background:#bbb;opacity:1"></div><div class="a" style="left:32.0px;top:11.0px;width:23.0px;height:1.3px;background:#777;opacity:1"></div><div class="a" style="left:17.0px;top:28.0px;width:49.0px;height:1.6px;background:#666;opacity:1"></div><div class="a" style="left:25.0px;top:31.8px;width:32.0px;height:1.4px;background:#777;opacity:1"></div><div class="a" style="left:22.0px;top:35.0px;width:39.0px;height:1.4px;background:#888;opacity:1"></div><div class="a" style="left:8.0px;top:45.5px;width:15.0px;height:1.3px;background:#8a8a70;opacity:1"></div><div class="a" style="left:9.0px;top:48.5px;width:13.0px;height:1.0px;background:#aaa;opacity:1"></div><div class="a" style="left:54px;top:40.4px;width:24px;height:14.6px;background:linear-gradient(90deg,#4f4f90,#8b86c0 50%,#6d6aa8)"></div></div>
<div class="a" style="left:20px;top:243px;width:92px;height:70px;background:#f6eef0"></div>
<div class="a" style="left:23px;top:245px;width:86.5px;height:66.5px;border:2.5px solid #58293a;border-radius:7px"></div>
<div class="num" style="top:247px">2</div>
<div class="thumb" style="top:248px"><svg class="a" style="left:0;top:0" width="82" height="62" viewBox="0 0 82 62">
<path d="M0 0H23Q11.5 2.5 0 11.5Z" fill="#4d7fd6" stroke="#2a4a9a" stroke-width=".6"/><path d="M0 46.6Q17.7 61.1 37.7 62H0Z" fill="#2550bd" stroke="#1a3a90" stroke-width=".6"/>
<path d="M72.5 0H82V3.2Q75 .7 72.5 0Z" fill="#2c58be"/><path d="M59.8 62Q72.8 59.7 82 56.5V62Z" fill="#213f9e"/></svg><div class="a" style="left:34.0px;top:9.5px;width:28.5px;height:2.5px;background:#8a8a8a;opacity:1"></div><div class="a" style="left:7.5px;top:19.0px;width:67.9px;height:1.2px;background:#c4c4c4;opacity:1"></div><div class="a" style="left:7.5px;top:23.0px;width:67.9px;height:1.2px;background:#c4c4c4;opacity:1"></div><div class="a" style="left:7.5px;top:27.0px;width:67.9px;height:1.2px;background:#c4c4c4;opacity:1"></div><div class="a" style="left:7.5px;top:31.0px;width:67.9px;height:1.2px;background:#c4c4c4;opacity:1"></div><div class="a" style="left:7.5px;top:35.0px;width:67.9px;height:1.2px;background:#c4c4c4;opacity:1"></div><div class="a" style="left:7.5px;top:39.0px;width:67.9px;height:1.2px;background:#c4c4c4;opacity:1"></div><div class="a" style="left:7.5px;top:43.0px;width:33.5px;height:1.2px;background:#c4c4c4;opacity:1"></div></div>
<div class="num" style="top:325px">3</div>
<div class="thumb" style="top:326px"><svg class="a" style="left:0;top:0" width="82" height="62" viewBox="0 0 82 62">
<path d="M0 0H23Q11.5 2.5 0 11.5Z" fill="#4d7fd6" stroke="#2a4a9a" stroke-width=".6"/><path d="M0 46.6Q17.7 61.1 37.7 62H0Z" fill="#2550bd" stroke="#1a3a90" stroke-width=".6"/>
<path d="M72.5 0H82V3.2Q75 .7 72.5 0Z" fill="#2c58be"/><path d="M59.8 62Q72.8 59.7 82 56.5V62Z" fill="#213f9e"/></svg><div class="a" style="left:31.0px;top:8.0px;width:28.3px;height:2.0px;background:#888;opacity:1"></div><div class="a" style="left:24.0px;top:14.0px;width:47.6px;height:2.0px;background:#888;opacity:1"></div><div class="a" style="left:11.0px;top:20.5px;width:61.0px;height:1.2px;background:#b5b5b5;opacity:1"></div><div class="a" style="left:11.0px;top:20.5px;width:8.0px;height:1.4px;background:#555;opacity:0.8"></div><div class="a" style="left:11.0px;top:23.5px;width:60.0px;height:1.2px;background:#b5b5b5;opacity:1"></div><div class="a" style="left:11.0px;top:23.5px;width:8.0px;height:1.4px;background:#555;opacity:0.8"></div><div class="a" style="left:11.0px;top:28.0px;width:60.0px;height:1.2px;background:#b5b5b5;opacity:1"></div><div class="a" style="left:11.0px;top:28.0px;width:8.0px;height:1.4px;background:#555;opacity:0.8"></div><div class="a" style="left:11.0px;top:31.0px;width:54.0px;height:1.2px;background:#b5b5b5;opacity:1"></div><div class="a" style="left:11.0px;top:31.0px;width:8.0px;height:1.4px;background:#555;opacity:0.8"></div><div class="a" style="left:11.0px;top:34.5px;width:61.0px;height:1.2px;background:#b5b5b5;opacity:1"></div><div class="a" style="left:11.0px;top:34.5px;width:8.0px;height:1.4px;background:#555;opacity:0.8"></div><div class="a" style="left:11.0px;top:37.5px;width:44.0px;height:1.2px;background:#b5b5b5;opacity:1"></div><div class="a" style="left:11.0px;top:37.5px;width:8.0px;height:1.4px;background:#555;opacity:0.8"></div><div class="a" style="left:11.0px;top:42.0px;width:61.0px;height:1.2px;background:#b5b5b5;opacity:1"></div><div class="a" style="left:11.0px;top:42.0px;width:8.0px;height:1.4px;background:#555;opacity:0.8"></div><div class="a" style="left:11.0px;top:45.5px;width:52.0px;height:1.2px;background:#b5b5b5;opacity:1"></div><div class="a" style="left:11.0px;top:45.5px;width:8.0px;height:1.4px;background:#555;opacity:0.8"></div></div>
<div class="num" style="top:405px">4</div>
<div class="thumb" style="top:406px"><svg class="a" style="left:0;top:0" width="82" height="62" viewBox="0 0 82 62">
<path d="M0 0H23Q11.5 2.5 0 11.5Z" fill="#4d7fd6" stroke="#2a4a9a" stroke-width=".6"/><path d="M0 46.6Q17.7 61.1 37.7 62H0Z" fill="#2550bd" stroke="#1a3a90" stroke-width=".6"/>
<path d="M72.5 0H82V3.2Q75 .7 72.5 0Z" fill="#2c58be"/><path d="M59.8 62Q72.8 59.7 82 56.5V62Z" fill="#213f9e"/></svg><div class="a" style="left:24.0px;top:9.0px;width:46.7px;height:2.3px;background:#444;opacity:1"></div><div class="a" style="left:11.0px;top:19.0px;width:61.0px;height:1.0px;background:#cfcfcf;opacity:1"></div><div class="a" style="left:11.0px;top:22.5px;width:58.0px;height:1.0px;background:#cfcfcf;opacity:1"></div><div class="a" style="left:11.0px;top:28.0px;width:54.0px;height:1.0px;background:#cfcfcf;opacity:1"></div><div class="a" style="left:11.0px;top:31.0px;width:60.0px;height:1.0px;background:#cfcfcf;opacity:1"></div><div class="a" style="left:11.0px;top:34.5px;width:34.0px;height:1.0px;background:#cfcfcf;opacity:1"></div><div class="a" style="left:11.0px;top:40.0px;width:59.0px;height:1.0px;background:#cfcfcf;opacity:1"></div><div class="a" style="left:11.0px;top:43.5px;width:50.0px;height:1.0px;background:#cfcfcf;opacity:1"></div><div class="a" style="left:11.0px;top:48.0px;width:24.0px;height:1.0px;background:#cfcfcf;opacity:1"></div></div>
<div class="num" style="top:485px">5</div>
<div class="thumb" style="top:486px"><svg class="a" style="left:0;top:0" width="82" height="62" viewBox="0 0 82 62">
<path d="M0 0H23Q11.5 2.5 0 11.5Z" fill="#4d7fd6" stroke="#2a4a9a" stroke-width=".6"/><path d="M0 46.6Q17.7 61.1 37.7 62H0Z" fill="#2550bd" stroke="#1a3a90" stroke-width=".6"/>
<path d="M72.5 0H82V3.2Q75 .7 72.5 0Z" fill="#2c58be"/><path d="M59.8 62Q72.8 59.7 82 56.5V62Z" fill="#213f9e"/></svg><div class="a" style="left:33.5px;top:7.5px;width:25.5px;height:1.1px;background:#666;opacity:1"></div><div class="a" style="left:27.0px;top:11.0px;width:40.6px;height:1.3px;background:#666;opacity:1"></div><div class="a" style="left:5px;top:17px;width:27.4px;height:22px;background:linear-gradient(180deg,#ada391,#9c927f)"></div><div class="a" style="left:51px;top:17px;width:26.5px;height:22px;background:linear-gradient(180deg,#8a847c,#4e4843)"></div><div class="a" style="left:31.3px;top:40px;width:26.4px;height:18.8px;background:linear-gradient(90deg,#a9a7ae,#6f6760 50%,#8a7c72)"></div></div>
<div class="num" style="top:564px">6</div>
<div class="thumb" style="top:565px"><svg class="a" style="left:0;top:0" width="82" height="62" viewBox="0 0 82 62">
<path d="M0 0H23Q11.5 2.5 0 11.5Z" fill="#4d7fd6" stroke="#2a4a9a" stroke-width=".6"/><path d="M0 46.6Q17.7 61.1 37.7 62H0Z" fill="#2550bd" stroke="#1a3a90" stroke-width=".6"/>
<path d="M72.5 0H82V3.2Q75 .7 72.5 0Z" fill="#2c58be"/><path d="M59.8 62Q72.8 59.7 82 56.5V62Z" fill="#213f9e"/></svg><div class="a" style="left:34.6px;top:5.5px;width:24.2px;height:1.3px;background:#666;opacity:1"></div><div class="a" style="left:34.6px;top:8.5px;width:24.2px;height:1.3px;background:#666;opacity:1"></div><div class="a" style="left:37.0px;top:12.0px;width:19.0px;height:1.2px;background:#666;opacity:1"></div><div class="a" style="left:7px;top:20.5px;width:28.7px;height:19.8px;background:#c9c29c"></div><div class="a" style="left:42.3px;top:20.5px;width:33px;height:21px;background:linear-gradient(180deg,#b9bcbf,#a3a6a9 60%,#55555a)"></div></div>
<div class="num" style="top:643px">7</div>
<div class="thumb" style="top:644px"><svg class="a" style="left:0;top:0" width="82" height="62" viewBox="0 0 82 62">
<path d="M0 0H23Q11.5 2.5 0 11.5Z" fill="#4d7fd6" stroke="#2a4a9a" stroke-width=".6"/><path d="M0 46.6Q17.7 61.1 37.7 62H0Z" fill="#2550bd" stroke="#1a3a90" stroke-width=".6"/>
<path d="M72.5 0H82V3.2Q75 .7 72.5 0Z" fill="#2c58be"/><path d="M59.8 62Q72.8 59.7 82 56.5V62Z" fill="#213f9e"/></svg><div class="a" style="left:20.0px;top:11.6px;width:52.0px;height:0.8px;background:#aaa;opacity:1"></div><div class="a" style="left:35.0px;top:10.5px;width:22.0px;height:1.0px;background:#888;opacity:1"></div><div class="a" style="left:7px;top:18.5px;width:30px;height:10px;background:#a69e8c"></div><div class="a" style="left:40px;top:18.5px;width:36px;height:10px;background:#8d8d8d"></div></div>


  <!-- slide area -->
  <div class="a" style="left:141px;top:631px;width:1150px;height:1px;background:#e0dfe1"></div>
  <div class="t" style="font-size:12.5px;color:#7a7a7a;letter-spacing:-0.16px;left:150.7px;top:639.1px">Нотатки до слайда</div>

  <!-- right scrollbar -->
  <div class="t" style="left:1287px;top:154px;font-size:8px;color:#555">▲</div>
  <div class="a" style="left:1289px;top:200px;width:6px;height:32px;background:#6e6e70;border-radius:3px"></div>
  <div class="t" style="left:1287px;top:574px;font-size:8px;color:#555">▼</div>
  <div class="t" style="left:1287px;top:588px;font-size:8px;color:#555;line-height:.6">▲<br>▲</div>
  <div class="t" style="left:1287px;top:601px;font-size:8px;color:#555;line-height:.6">▼<br>▼</div>
</div>


<!-- ============ MAIN SLIDE ============ -->
<svg class="a" style="left:0;top:0" width="1297" height="864" viewBox="0 0 1297 864">
  <defs>
    <filter id="blur1" x="-20%" y="-20%" width="140%" height="140%"><feGaussianBlur stdDeviation="3"/></filter>
    <filter id="blur2" x="-20%" y="-20%" width="140%" height="140%"><feGaussianBlur stdDeviation="4"/></filter>
    <linearGradient id="gtl" x1="0" y1="0" x2="0" y2="1"><stop offset="0" stop-color="#86b0ea"/><stop offset="0.3" stop-color="#5a8ade"/><stop offset="1" stop-color="#3f72cc"/></linearGradient>
    <clipPath id="ctl"><path d="M405 287H596Q501.5 308 405 384Z"/></clipPath>
    <linearGradient id="gbl" x1="0" y1="0" x2="0" y2="1"><stop offset="0" stop-color="#2456c6"/><stop offset=".85" stop-color="#1d4ab8"/><stop offset="1" stop-color="#0f2a82"/></linearGradient>
    <linearGradient id="gtr" x1="0" y1="0" x2="1" y2="0"><stop offset="0" stop-color="#1d3c8c"/><stop offset="1" stop-color="#3b74d8"/></linearGradient>
    <linearGradient id="gbr" x1="0" y1="0" x2="1" y2="0"><stop offset="0" stop-color="#1a2f78"/><stop offset="0.5" stop-color="#2c57c0"/><stop offset="1" stop-color="#1f47b4"/></linearGradient>
    <clipPath id="cbr"><path d="M856 750.5Q953.4 732.8 1023 709V750.5Z"/></clipPath>
    <clipPath id="sc"><rect x="405" y="287" width="618" height="463"/></clipPath>
  </defs>
  <rect x="404" y="286" width="620" height="465" fill="#e9e8ea"/>
  <rect x="405" y="287" width="618" height="463" fill="#fefefe"/>
  <g clip-path="url(#sc)">
    <!-- shadows -->
    <path d="M405 287H600Q505 314 405 392Z" fill="#c8aea8" filter="url(#blur1)" opacity=".55"/>
    <path d="M405 627Q536 733 695 751H405Z" fill="#c0b8a8" filter="url(#blur1)" opacity=".45"/>
    <path d="M945 287H1023V316Q985 300 945 287Z" fill="#b9b0b4" filter="url(#blur1)" opacity=".5"/>
    <path d="M850 750Q945 730 1023 704V750Z" fill="#b0b0c0" filter="url(#blur1)" opacity=".5"/>
    <!-- corners -->
    <path d="M405 287H596Q501.5 308 405 384Z" fill="url(#gtl)"/>
    <g clip-path="url(#ctl)"><path d="M596 287Q501.5 308 405 384" fill="none" stroke="#1c3a86" stroke-width="7" filter="url(#blur1)" opacity=".8"/><path d="M596 287Q501.5 308 405 384" fill="none" stroke="#1a3475" stroke-width="2.5"/></g>
    <path d="M405 634.3Q538.7 737.9 689 750.6H405Z" fill="url(#gbl)" stroke="#15307e" stroke-width="1.5"/>
    <path d="M951 287H1023V311Q970.2 292.4 951 287Z" fill="url(#gtr)" stroke="#182f70" stroke-width="1"/>
    <path d="M856 750.5Q953.4 732.8 1023 709V750.5Z" fill="url(#gbr)"/>
    <path d="M856 750.5Q953.4 732.8 1023 709" fill="none" stroke="#7fa2e6" stroke-width="1" opacity=".7"/>
    <g clip-path="url(#cbr)"><rect x="850" y="744" width="175" height="8" fill="#0f2670" opacity=".6" filter="url(#blur1)"/></g>
    <!-- clouds -->
    <g filter="url(#blur2)" fill="#9fbdf0" opacity=".7">
      <ellipse cx="450" cy="296" rx="30" ry="6"/><ellipse cx="520" cy="294" rx="30" ry="5"/><ellipse cx="460" cy="312" rx="20" ry="5"/><ellipse cx="415" cy="340" rx="8" ry="12"/>
    </g>
    <g filter="url(#blur2)" fill="#d2dcf6" opacity=".95">
      <ellipse cx="425" cy="722" rx="10" ry="10"/><ellipse cx="412" cy="735" rx="6" ry="9"/><ellipse cx="520" cy="728" rx="11" ry="20"/><ellipse cx="536" cy="722" rx="10" ry="12"/><ellipse cx="628" cy="746" rx="14" ry="4"/>
    </g>
    <g filter="url(#blur1)" fill="#8fb0f0" opacity=".6"><ellipse cx="990" cy="733" rx="10" ry="6"/></g>
  </g>
</svg>
<div class="t" style="left:654px;top:349px;font-family:'Liberation Serif',serif;font-size:37.5px;color:#1a1a1a">Актуальність</div>
<div class="a bodyl" style="left:458px;top:425.4px;width:512px;text-align:justify;text-align-last:justify">Практичне навчання є невідʼємною складовою</div>
<div class="a bodyl" style="left:458px;top:454.3px;width:512px;text-align:justify;text-align-last:justify">професійної підготовки психолога. Воно</div>
<div class="a bodyl" style="left:458px;top:483.2px;width:512px;text-align:justify;text-align-last:justify">забезпечує інтеграцію теоретичних знань із</div>
<div class="a bodyl" style="left:458px;top:512.1px;width:512px;text-align:justify;text-align-last:justify">реальними умовами професійної діяльності.</div>
<div class="a bodyl" style="left:458px;top:541.0px;width:512px;text-align:justify;text-align-last:justify">Завдяки практиці студенти набувають навичок</div>
<div class="a bodyl" style="left:458px;top:569.9px;width:512px;text-align:justify;text-align-last:justify">спілкування, діагностики, консультування та</div>
<div class="a bodyl" style="left:458px;top:598.8px;width:512px;text-align:justify;text-align-last:left">психологічної допомоги.</div>


<!-- ============ BOTTOM TOOLBAR ============ -->
<div id="bot" class="a">
  <svg class="a" style="left:496px;top:14px" width="26" height="24" viewBox="0 0 26 24" fill="none" stroke="#e6e6e6" stroke-width="1.7">
    <circle cx="8.5" cy="5" r="2.6"/><circle cx="16.5" cy="9" r="2.8"/><path d="M9 21.5H6.5Q3.5 21.5 3.5 17.5Q3.5 13 9 12.5"/><rect x="11.5" y="15.5" width="10.5" height="6" rx="3"/>
  </svg>
  <div class="t" style="left:527px;top:17px;font-size:13px;color:#bdbdbd;letter-spacing:-0.5px">18</div>
  <svg class="a" style="left:563px;top:23px" width="10" height="6" viewBox="0 0 10 6" fill="none" stroke="#e0e0e0" stroke-width="1.8" stroke-linecap="round"><path d="M1.5 5l3.5-3.5 3.5 3.5"/></svg>
  <div class="bl" style="letter-spacing:-0.05px;left:472.7px;top:46.1px">Participants</div>

  <svg class="a" style="left:619px;top:14px" width="28" height="24" viewBox="0 0 28 24" fill="none" stroke="#e8e8e8" stroke-width="1.8" stroke-linejoin="round">
    <path d="M4 3h18a2.5 2.5 0 0 1 2.5 2.5v9a2.5 2.5 0 0 1-2.5 2.5H10l-4.5 4.5V17H4a2.5 2.5 0 0 1-2.5-2.5v-9A2.5 2.5 0 0 1 4 3z"/>
  </svg>
  <div class="a" style="left:636px;top:8px;width:18px;height:18px;border-radius:50%;background:#e0484c;border:1.5px solid #000"></div>
  <div class="t" style="left:641px;top:12px;font-size:10.5px;color:#fff;font-weight:bold">2</div>
  <svg class="a" style="left:663px;top:23px" width="10" height="6" viewBox="0 0 10 6" fill="none" stroke="#e0e0e0" stroke-width="1.8" stroke-linecap="round"><path d="M1.5 5l3.5-3.5 3.5 3.5"/></svg>
  <div class="bl" style="letter-spacing:-0.26px;left:617.7px;top:46.1px">Chat</div>

  <svg class="a" style="left:713px;top:13px" width="30" height="24" viewBox="0 0 30 24" fill="none" stroke="#e8e8e8" stroke-width="1.8" stroke-linejoin="round">
    <path d="M15 22C6 16 2 12 2 7.5A5.5 5.5 0 0 1 15 5a5.5 5.5 0 0 1 13 2.5C28 12 24 16 15 22z"/>
  </svg>
  <svg class="a" style="left:753px;top:23px" width="10" height="6" viewBox="0 0 10 6" fill="none" stroke="#e0e0e0" stroke-width="1.8" stroke-linecap="round"><path d="M1.5 5l3.5-3.5 3.5 3.5"/></svg>
  <div class="bl" style="letter-spacing:-0.39px;left:710.2px;top:46.1px">React</div>

  <svg class="a" style="left:812px;top:15px" width="30" height="21" viewBox="0 0 30 21" fill="none" stroke="#e8e8e8" stroke-width="1.8">
    <rect x="1.5" y="1.5" width="27" height="18" rx="2"/><path d="M15 15V6M11 9.5l4-4 4 4" stroke-linecap="round"/>
  </svg>
  <svg class="a" style="left:862px;top:23px" width="10" height="6" viewBox="0 0 10 6" fill="none" stroke="#e0e0e0" stroke-width="1.8" stroke-linecap="round"><path d="M1.5 5l3.5-3.5 3.5 3.5"/></svg>
  <div class="bl" style="letter-spacing:-0.09px;left:809.7px;top:46.1px">Share</div>

  <svg class="a" style="left:914px;top:12px" width="30" height="30" viewBox="0 0 30 30" fill="none" stroke="#e8e8e8" stroke-width="1.8">
    <circle cx="14.5" cy="14" r="12.5"/><circle cx="9" cy="14" r="1.3" fill="#e8e8e8"/><circle cx="14.5" cy="14" r="1.3" fill="#e8e8e8"/><circle cx="20" cy="14" r="1.3" fill="#e8e8e8"/>
  </svg>
  <div class="bl" style="letter-spacing:0.81px;left:912.2px;top:46.1px">More</div>
</div>
<!-- TCH notification -->
<div class="a" style="left:1024px;top:750px;width:273px;height:48px;background:#f7f7f8;box-shadow:0 -1px 2px rgba(0,0,0,.05);overflow:hidden">
  <div class="a" style="left:5px;top:6px;width:54px;height:54px;border-radius:50%;background:#d13c40"></div>
  <div class="t" style="font-size:19px;font-weight:bold;color:#fff;letter-spacing:-0.78px;left:13.7px;top:23.7px">TCH</div>
  <svg class="a" style="left:72px;top:10px" width="11" height="10" viewBox="0 0 11 10" fill="#555"><path d="M1 3h2l5-3v10L3 7H1z"/><path d="M9 3l2-1M9 5h2M9 7l2 1" stroke="#555" stroke-width="1"/></svg>
  <div class="t" style="font-size:11.5px;font-weight:bold;color:#555;letter-spacing:-0.43px;left:84.7px;top:6.9px">TCH новини / TCH.ua</div>
  <svg class="a" style="left:252px;top:8px" width="10" height="10" viewBox="0 0 10 10" stroke="#cfcfcf" stroke-width="1.2"><path d="M1 1l8 8M9 1l-8 8"/></svg>
  <svg class="a" style="left:72px;top:27px" width="14" height="13" viewBox="0 0 14 13" stroke="#777" stroke-width="1.4"><path d="M1 1l12 11M13 1L1 12"/><path d="M3 9l2 2M11 9l-2 2" stroke-width="2"/></svg>
  <div class="t" style="left:91px;top:24px;font-size:14px;font-weight:bold;color:#d94444">!</div>
  <div class="t" style="font-size:11.5px;color:#c3c3c3;letter-spacing:-0.01px;left:101.7px;top:25.4px">З початку операції на</div>
  <div class="t" style="left:69px;top:41.5px;font-size:11.5px;color:#c4c4c4;letter-spacing:-0.2px">Плоді Сили Оборони відновило</div>
</div>
</div>
</body></html>
